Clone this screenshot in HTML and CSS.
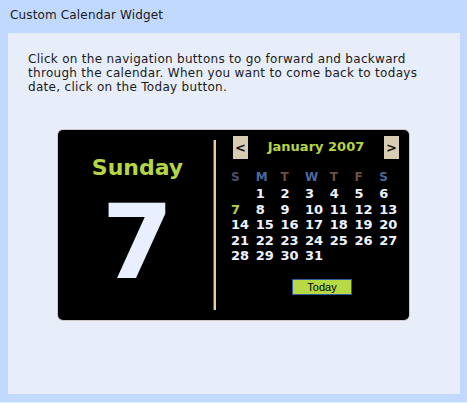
FILE: index.html
```html
<!DOCTYPE html>
<html>
<head>
<meta charset="utf-8">
<link rel="stylesheet" href="styles.css">
</head>
<body>
<div class="page">
  <div class="title">Custom Calendar Widget</div>
  <div class="panel">
    <p class="intro">Click on the navigation buttons to go forward and backward through the calendar. When you want to come back to todays date, click on the Today button.</p>
    <div class="cal">
      <div class="today-side">
        <div class="dayname">Sunday</div>
        <div class="daynum">7</div>
      </div>
      <div class="sep"></div>
      <div class="month-side">
        <div class="nav">
          <span class="navbtn">&lt;</span>
          <span class="month">January 2007</span>
          <span class="navbtn">&gt;</span>
        </div>
        <div class="grid">
          <span class="hd b">S</span><span class="hd c">M</span><span class="hd r">T</span><span class="hd c">W</span><span class="hd r">T</span><span class="hd r">F</span><span class="hd c">S</span>
          <span></span><span>1</span><span>2</span><span>3</span><span>4</span><span>5</span><span>6</span>
          <span class="cur">7</span><span>8</span><span>9</span><span>10</span><span>11</span><span>12</span><span>13</span>
          <span>14</span><span>15</span><span>16</span><span>17</span><span>18</span><span>19</span><span>20</span>
          <span>21</span><span>22</span><span>23</span><span>24</span><span>25</span><span>26</span><span>27</span>
          <span>28</span><span>29</span><span>30</span><span>31</span><span></span><span></span><span></span>
        </div>
        <div class="btnrow"><span class="todaybtn">Today</span></div>
      </div>
    </div>
  </div>
</div>
</body>
</html>
```
FILE: styles.css
```css
html, body {
  margin: 0;
  padding: 0;
}
body {
  background: #c1d9ff;
  font-family: "DejaVu Sans", Verdana, sans-serif;
}
.page {
  width: 467px;
  height: 402px;
  border-bottom: 1px solid #e6eefb;
  box-sizing: content-box;
}
.title {
  height: 33px;
  box-sizing: border-box;
  padding: 8px 0 0 10px;
  font-size: 12px;
  line-height: 14px;
  letter-spacing: 0.15px;
  color: #1a1a1a;
}
.panel {
  margin-left: 8px;
  width: 452px;
  height: 361px;
  background: #e7eef9;
  box-sizing: border-box;
  padding: 19px 0 0 20px;
}
.intro {
  margin: 0;
  width: 400px;
  font-size: 12px;
  line-height: 14px;
  letter-spacing: 0.3px;
  color: #1a1a1a;
}
.cal {
  margin: 36px 0 0 30px;
  width: 351px;
  height: 190px;
  background: #000;
  border-radius: 5px;
  box-shadow: 0 0 0 1px rgba(140, 80, 50, 0.25);
  display: flex;
  box-sizing: border-box;
  padding-top: 10px;
}
.today-side {
  width: 155px;
  box-sizing: border-box;
  padding-left: 4px;
  display: flex;
  flex-direction: column;
  align-items: center;
}
.dayname {
  margin-top: 14px;
  font-weight: bold;
  font-size: 22px;
  line-height: 28px;
  color: #b6d544;
}
.daynum {
  margin-top: 5px;
  font-weight: bold;
  font-size: 103px;
  line-height: 110px;
  color: #e8f0ff;
}
.sep {
  width: 3px;
  height: 170px;
  border-left: 1px solid #8a4a2c;
  background: #e9cba2;
  box-sizing: border-box;
}
.month-side {
  flex: 1;
  padding-left: 17px;
  margin-top: -4px;
}
.nav {
  display: flex;
  align-items: center;
  width: 166px;
  height: 23px;
}
.navbtn {
  width: 15px;
  height: 23px;
  background: #d8cdb3;
  color: #111;
  font-size: 13px;
  font-weight: bold;
  line-height: 23px;
  text-align: center;
}
.month {
  flex: 1;
  text-align: center;
  font-weight: bold;
  font-size: 13px;
  color: #b6d544;
  margin-top: -3px;
}
.grid {
  margin-top: 10px;
  margin-left: -2px;
  display: grid;
  grid-template-columns: repeat(7, 24.7px);
  font-weight: bold;
  font-size: 13px;
  line-height: 15.5px;
  color: #eef3ff;
}
.hd {
  font-size: 12px;
  line-height: 17px;
}
.hd.b { color: #4a4e72; }
.hd.c { color: #4a68a0; }
.hd.r { color: #6e4e40; }
.cur { color: #b6d544; }
.btnrow {
  margin-top: 12px;
  padding-left: 59px;
}
.todaybtn {
  display: inline-block;
  width: 60px;
  height: 16px;
  box-sizing: border-box;
  border: 1px solid #2d5a9c;
  background: #b6d944;
  color: #000;
  font-family: "Liberation Sans", Arial, sans-serif;
  font-size: 11px;
  line-height: 14px;
  text-align: center;
}
```
